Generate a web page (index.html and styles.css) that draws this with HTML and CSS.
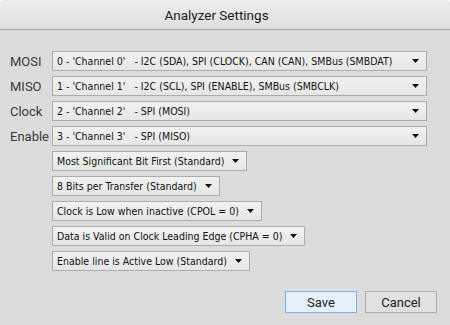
FILE: index.html
```html
<!DOCTYPE html>
<html>
<head>
<meta charset="utf-8">
<link rel="stylesheet" href="styles.css">
</head>
<body>
<div class="dialog">
  <div class="titlebar">Analyzer Settings</div>
  <div class="content">
    <div class="grid">
      <div class="label">MOSI</div>
      <div class="select wide"><span>0 - 'Channel 0'&nbsp;&nbsp; - I2C (SDA), SPI (CLOCK), CAN (CAN), SMBus (SMBDAT)</span><svg class="arrow" width="7" height="4" viewBox="0 0 7 4"><path d="M0 0H7L3.5 4Z"/></svg></div>
      <div class="label">MISO</div>
      <div class="select wide"><span>1 - 'Channel 1'&nbsp;&nbsp; - I2C (SCL), SPI (ENABLE), SMBus (SMBCLK)</span><svg class="arrow" width="7" height="4" viewBox="0 0 7 4"><path d="M0 0H7L3.5 4Z"/></svg></div>
      <div class="label">Clock</div>
      <div class="select wide"><span>2 - 'Channel 2'&nbsp;&nbsp; - SPI (MOSI)</span><svg class="arrow" width="7" height="4" viewBox="0 0 7 4"><path d="M0 0H7L3.5 4Z"/></svg></div>
      <div class="label">Enable</div>
      <div class="select wide"><span>3 - 'Channel 3'&nbsp;&nbsp; - SPI (MISO)</span><svg class="arrow" width="7" height="4" viewBox="0 0 7 4"><path d="M0 0H7L3.5 4Z"/></svg></div>
      <div class="select small"><span>Most Significant Bit First (Standard)</span><svg class="arrow" width="7" height="4" viewBox="0 0 7 4"><path d="M0 0H7L3.5 4Z"/></svg></div>
      <div class="select small"><span>8 Bits per Transfer (Standard)</span><svg class="arrow" width="7" height="4" viewBox="0 0 7 4"><path d="M0 0H7L3.5 4Z"/></svg></div>
      <div class="select small"><span>Clock is Low when inactive (CPOL = 0)</span><svg class="arrow" width="7" height="4" viewBox="0 0 7 4"><path d="M0 0H7L3.5 4Z"/></svg></div>
      <div class="select small"><span>Data is Valid on Clock Leading Edge (CPHA = 0)</span><svg class="arrow" width="7" height="4" viewBox="0 0 7 4"><path d="M0 0H7L3.5 4Z"/></svg></div>
      <div class="select small"><span>Enable line is Active Low (Standard)</span><svg class="arrow" width="7" height="4" viewBox="0 0 7 4"><path d="M0 0H7L3.5 4Z"/></svg></div>
    </div>
  </div>
  <div class="footer">
    <button class="btn primary">Save</button>
    <button class="btn">Cancel</button>
  </div>
</div>
</body>
</html>
```
FILE: styles.css
```css
html, body {
  margin: 0;
  padding: 0;
  background: #ffffff;
}
.dialog {
  width: 450px;
  height: 325px;
  background: #dcdcdc;
  display: flex;
  flex-direction: column;
  border-radius: 4px 4px 0 0;
  overflow: hidden;
  font-family: Roboto, "Liberation Sans", sans-serif;
}
.titlebar {
  height: 30px;
  box-sizing: border-box;
  border-bottom: 1px solid #a8a8a8;
  background: linear-gradient(#eeeeee, #dedede);
  display: flex;
  align-items: center;
  justify-content: center;
  padding-right: 17px;
  font-size: 13.5px;
  color: #1a1a1a;
}
.content {
  padding: 21px 0 0 10px;
  flex: 1;
}
.grid {
  display: grid;
  grid-template-columns: 42px 375px;
  grid-auto-rows: 20px;
  row-gap: 5px;
}
.label {
  grid-column: 1;
  font-size: 13px;
  color: #3a3a3a;
  display: flex;
  align-items: center;
}
.select {
  grid-column: 2;
  box-sizing: border-box;
  height: 20px;
  border: 1px solid #acacac;
  background: linear-gradient(#f2f2f2, #e6e6e6);
  display: flex;
  align-items: center;
  padding: 0 7px 0 4px;
  font-family: "DejaVu Sans Condensed", "DejaVu Sans", sans-serif;
  font-size: 10.5px;
  color: #111;
  white-space: pre;
}
.select span {
  flex: 1;
}
.select.small {
  justify-self: start;
}
.select.small span {
  margin-right: 8px;
}
.arrow {
  fill: #111;
  flex: none;
}
.footer {
  display: flex;
  justify-content: flex-end;
  gap: 8px;
  padding: 0 13px 12px 0;
}
.btn {
  width: 72px;
  height: 22px;
  box-sizing: border-box;
  border: 1px solid #adadad;
  background: #e1e1e1;
  font-family: Roboto, "Liberation Sans", sans-serif;
  font-size: 13px;
  color: #222;
  padding: 0;
}
.btn.primary {
  border-color: #7db3e8;
  background: #e5f0fa;
}
```
